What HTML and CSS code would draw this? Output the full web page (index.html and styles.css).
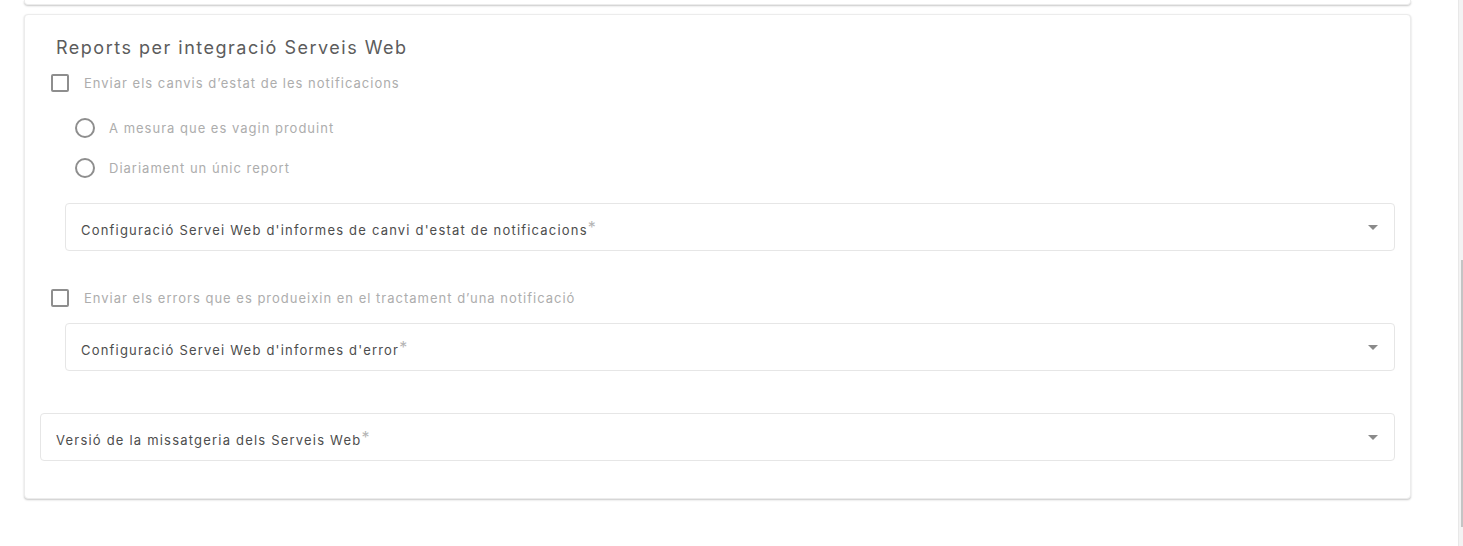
FILE: index.html
```html
<!DOCTYPE html>
<html lang="ca">

<head>
    <meta charset="UTF-8" />
    <title>Reports per integració Serveis Web</title>
    <link rel="stylesheet" href="styles.css">
</head>

<body>
    <div class="page">
        <div class="card card-prev"></div>

        <div class="card">
            <h2 class="title">Reports per integració Serveis Web</h2>

            <label class="check">
                <span class="box"></span>
                <span>Enviar els canvis d’estat de les notificacions</span>
            </label>

            <div class="radios">
                <label class="radio"><span class="circle"></span><span>A mesura que es vagin produint</span></label>
                <label class="radio"><span class="circle"></span><span>Diariament un únic report</span></label>
            </div>

            <div class="select inset first">
                <span class="label">Configuració Servei Web d'informes de canvi d'estat de notificacions<sup>*</sup></span>
                <span class="arrow"></span>
            </div>

            <label class="check second">
                <span class="box"></span>
                <span>Enviar els errors que es produeixin en el tractament d’una notificació</span>
            </label>

            <div class="select inset">
                <span class="label">Configuració Servei Web d'informes d'error<sup>*</sup></span>
                <span class="arrow"></span>
            </div>

            <div class="select last">
                <span class="label">Versió de la missatgeria dels Serveis Web<sup>*</sup></span>
                <span class="arrow"></span>
            </div>
        </div>
    </div>

    <div class="scrollbar">
        <div class="thumb"></div>
    </div>
</body>

</html>
```

FILE: styles.css
```css
:root {
    --border: #e6e6e6;
    --muted: #adadad;
    --text: #4d4d4d;
    --radius: 4px
}

* {
    box-sizing: border-box
}

body {
    margin: 0;
    height: 546px;
    overflow: hidden;
    font-family: "Inter", "Open Sans", sans-serif;
    background: #fff;
    color: var(--text);
    display: flex
}

.page {
    flex: 1;
    padding-left: 24px;
    padding-right: 47px
}

.card {
    background: #fff;
    border: 1px solid #ececec;
    border-radius: var(--radius);
    box-shadow: 0 1px 2px rgba(0, 0, 0, .22);
    display: flex;
    flex-direction: column;
    padding: 21px 15px 37px
}

.card-prev {
    height: 5px;
    padding: 0;
    border-top: none;
    border-radius: 0 0 var(--radius) var(--radius);
    margin-bottom: 9px
}

.title {
    margin: 0 0 0 16px;
    font-size: 18px;
    font-weight: 400;
    line-height: 24px;
    color: #5c5c5c;
    letter-spacing: 1.5px
}

.check {
    display: flex;
    align-items: center;
    gap: 15px;
    margin: 14px 0 0 11px;
    font-size: 13px;
    color: var(--muted);
    letter-spacing: 1px;
    line-height: 18px
}

.check.second {
    margin-top: 38px
}

.box {
    width: 18px;
    height: 18px;
    border: 2px solid #8e8e8e;
    border-radius: 2px;
    flex: none
}

.radios {
    display: flex;
    flex-direction: column;
    gap: 20px;
    margin: 26px 0 0 35px
}

.radio {
    display: flex;
    align-items: center;
    gap: 14px;
    font-size: 13px;
    color: var(--muted);
    letter-spacing: 1px;
    line-height: 20px
}

.circle {
    width: 20px;
    height: 20px;
    border: 2px solid #8e8e8e;
    border-radius: 50%;
    flex: none
}

.select {
    height: 48px;
    border: 1px solid var(--border);
    border-radius: var(--radius);
    display: flex;
    align-items: center;
    justify-content: space-between;
    padding: 5px 16px 0 15px;
    font-size: 13px;
    letter-spacing: 1.2px;
    color: var(--text)
}

.select.inset {
    margin-left: 25px;
    margin-top: 16px
}

.select.first {
    margin-top: 25px
}

.select.last {
    margin-top: 42px
}

.label sup {
    color: #b5b5b5;
    font-size: 16px;
    vertical-align: top;
    line-height: 1;
    margin-left: 0;
    position: relative;
    top: -3px
}

.arrow {
    width: 0;
    height: 0;
    border-left: 5px solid transparent;
    border-right: 5px solid transparent;
    border-top: 5px solid #8a8a8a;
    margin-top: -5px
}

.scrollbar {
    width: 5px;
    background: #f3f3f3;
    border-left: 1px solid #e8e8e8;
    padding-top: 260px
}

.thumb {
    height: 267px;
    margin-left: 2px;
    background: #c4c4c4
}
```
